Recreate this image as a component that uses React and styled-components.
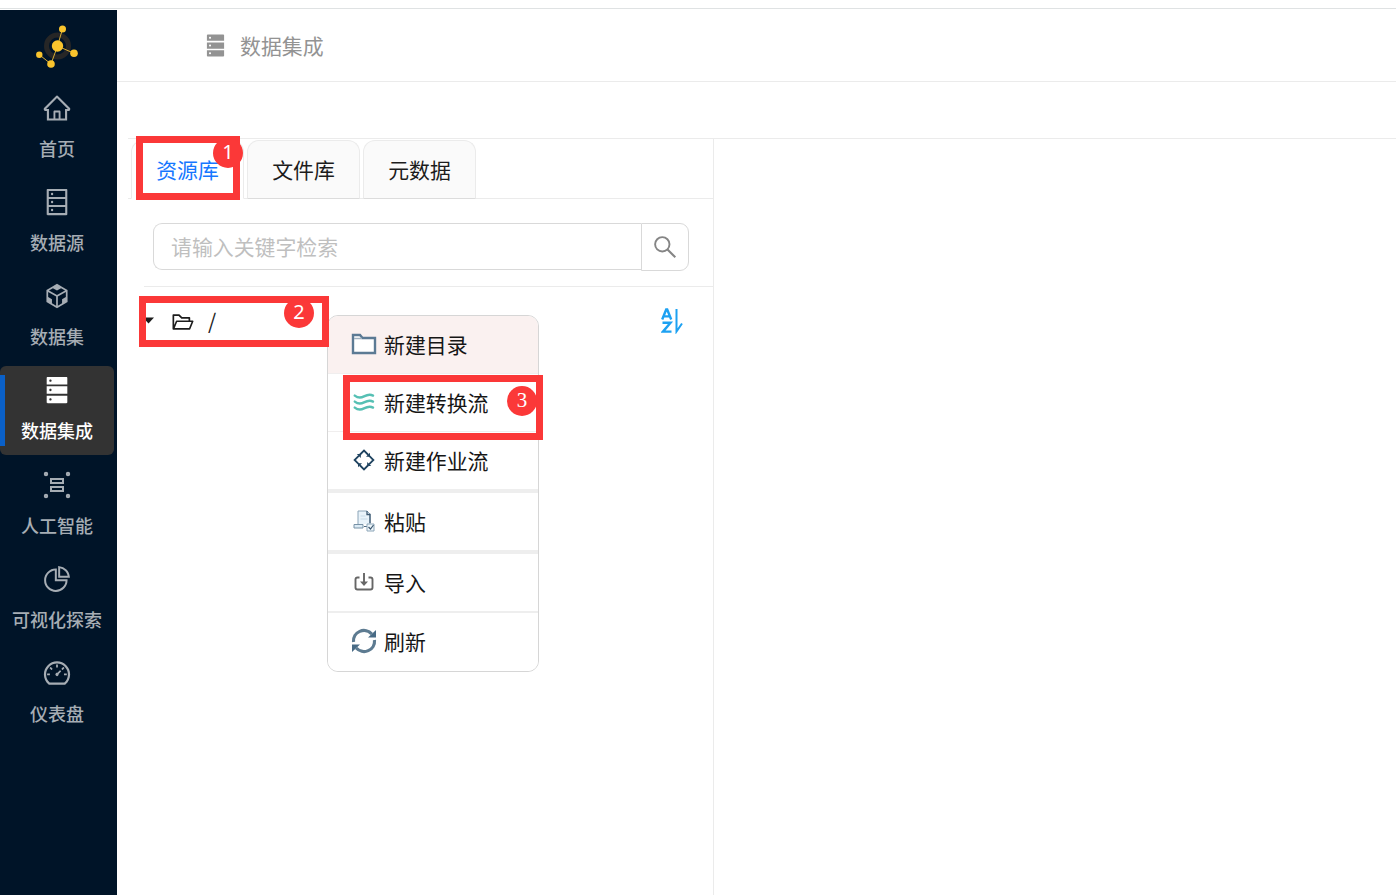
import React from "react";
import styled, { createGlobalStyle, css } from "styled-components";
import {
  AiOutlineHome,
  AiOutlineDatabase,
  AiOutlineCodeSandbox,
  AiFillDatabase,
  AiOutlinePieChart,
  AiOutlineDashboard,
  AiOutlineFolderOpen,
} from "react-icons/ai";

const GlobalStyle = createGlobalStyle`
  *, *::before, *::after { box-sizing: border-box; }
  body {
    margin: 0;
    background: #fff;
    color: #1c1c1c;
    font-family: "Noto Sans CJK SC", sans-serif;
    font-size: 20.9px;
    overflow: hidden;
  }
  svg { display: block; flex: none; }
`;

const Page = styled.div`
  position: relative;
  display: flex;
  flex-direction: column;
  width: 1396px;
  height: 895px;
`;

const TopStrip = styled.div`
  flex: none;
  height: 10px;
  border-bottom: 1px solid #fff;
  box-shadow: inset 0 -1px 0 #dfe2e3;
`;

const Shell = styled.div`
  flex: 1;
  display: flex;
  min-height: 0;
`;

const Sidebar = styled.nav`
  flex: none;
  width: 117px;
  background: #001428;
  display: flex;
  flex-direction: column;
`;

const Logo = styled.div`
  height: 73.4px;
  padding: 13px 0 0 34px;
`;

const NavList = styled.div`
  display: flex;
  flex-direction: column;
  gap: 5.2px;
`;

const NavItem = styled.a`
  width: 114px;
  height: 89px;
  padding-top: 9.5px;
  display: flex;
  flex-direction: column;
  align-items: center;
  border-radius: 6px;
  color: #a6adb4;
  font-size: 18px;
  font-weight: 500;
  line-height: 28px;
  gap: 11px;
  white-space: nowrap;
  ${(p) =>
    p.$active &&
    css`
      color: #fff;
      background: linear-gradient(#0a60c8, #0a60c8) 0 9px / 5px 71px no-repeat, #333;
    `}
`;

const Main = styled.div`
  flex: 1;
  display: flex;
  flex-direction: column;
  min-width: 0;
`;

const Header = styled.header`
  flex: none;
  height: 72px;
  padding: 0 0 1px 86px;
  display: flex;
  align-items: center;
  gap: 12px;
  color: #939393;
  border-bottom: 1px solid #ebebeb;
`;

const HeaderTitle = styled.span`
  padding-bottom: 1px;
`;

const Content = styled.div`
  flex: 1;
  display: flex;
  margin: 56px 0 0 11px;
  border-top: 1px solid #ebebeb;
`;

const Panel = styled.section`
  width: 586px;
  border-right: 1px solid #ebebeb;
`;

const Tabs = styled.div`
  height: 60px;
  display: flex;
  gap: 3px;
  padding: 1px 0 0 3px;
  box-shadow: inset 0 -1px 0 #ebebeb;
`;

const Tab = styled.div`
  width: 113px;
  height: 59px;
  padding-bottom: 2px;
  border: 1px solid #ebebeb;
  border-radius: 12px 12px 0 0;
  display: flex;
  align-items: center;
  justify-content: center;
  background: ${(p) => (p.$active ? "#fff" : "#fafafa")};
  border-bottom-color: ${(p) => (p.$active ? "#fff" : "#dcdcdc")};
  color: ${(p) => (p.$active ? "#1677ff" : "#1c1c1c")};
`;

const SearchRow = styled.div`
  height: 88px;
  display: flex;
  margin-left: 16px;
  padding: 24px 0 0 9px;
  border-bottom: 1px solid #ebebeb;
`;

const SearchField = styled.div`
  width: 488px;
  height: 47px;
  padding: 0 0 2px 17px;
  display: flex;
  align-items: center;
  border: 1px solid #d9d9d9;
  border-right: 0;
  border-radius: 9px 0 0 9px;
  color: #bfbfbf;
`;

const SearchButton = styled.div`
  width: 48px;
  height: 48px;
  display: flex;
  align-items: center;
  justify-content: center;
  border: 1px solid #d9d9d9;
  border-radius: 0 9px 9px 0;
`;

const TreeRow = styled.div`
  height: 67px;
  padding: 0 30px 0 15px;
  display: flex;
  align-items: center;
`;

const TreeIcon = styled.span`
  margin: 2px 13px 0 17px;
`;

const TreeLabel = styled.span`
  flex: 1;
  padding-bottom: 1px;
`;

const Menu = styled.div`
  position: absolute;
  left: 327px;
  top: 315px;
  width: 212px;
  height: 357px;
  border: 1px solid #d6d6d6;
  border-radius: 11px;
  background: #fff;
  overflow: hidden;
`;

const MenuItem = styled.div`
  height: ${(p) => p.$height || 57}px;
  padding: 0 0 2px 23px;
  display: flex;
  align-items: center;
  gap: 7px;
  color: #161616;
  background: ${(p) => (p.$hover ? "#faf1f0" : "#fff")};
  border-bottom: ${(p) => (p.$line ? "1px solid #f0eeee" : "0")};
`;

const MenuIcon = styled.span`
  width: 26px;
  display: flex;
  justify-content: center;
`;

const Divider = styled.div`
  height: ${(p) => p.$size}px;
  background: #eee;
`;

const Mark = styled.div`
  position: absolute;
  left: ${(p) => p.$x}px;
  top: ${(p) => p.$y}px;
  width: ${(p) => p.$w}px;
  height: ${(p) => p.$h}px;
  border: 7px solid #fb3838;
`;

const Badge = styled.span`
  position: absolute;
  left: ${(p) => p.$x}px;
  top: ${(p) => p.$y}px;
  width: 30px;
  height: 30px;
  border-radius: 50%;
  background: #fb3838;
  color: #fff;
  font-family: ${(p) => (p.$serif ? '"Liberation Serif", serif' : '"Noto Sans", sans-serif')};
  font-size: ${(p) => (p.$serif ? 21 : 20)}px;
  line-height: 28px;
  text-align: center;
`;

const LogoMark = () => (
  <svg width="46" height="46" viewBox="0 0 46 46">
    <circle cx="23.5" cy="23" r="11" fill="none" stroke="#262626" strokeWidth="5" />
    <path d="M28.5 6 L23.5 23 L40 30.3 M23.5 23 L17 41 L5.3 31.7" fill="none" stroke="#d9ae35" strokeWidth="1" />
    <g fill="#f9c42d">
      <circle cx="23.5" cy="23" r="5.7" />
      <circle cx="28.5" cy="6" r="3.5" />
      <circle cx="40" cy="30.3" r="3.8" />
      <circle cx="17" cy="41" r="3.8" />
      <circle cx="5.3" cy="31.7" r="3.2" />
    </g>
  </svg>
);

const AiIcon = () => (
  <svg width="30" height="30" viewBox="0 0 30 30" fill="none" stroke="currentColor">
    <path d="M9 9h12v4H9z M9 17h12v4H9z" strokeWidth="2" />
    <g strokeWidth="2">
      <circle cx="4" cy="4" r="1.2" />
      <circle cx="26" cy="4" r="1.2" />
      <circle cx="4" cy="26" r="1.2" />
      <circle cx="26" cy="26" r="1.2" />
    </g>
  </svg>
);

const SearchIcon = () => (
  <svg width="24" height="24" viewBox="0 0 24 24" fill="none" stroke="#858585" strokeWidth="1.9">
    <circle cx="9.3" cy="9.3" r="7.2" />
    <path d="M14.5 14.5l7.8 7.8" strokeWidth="2.1" />
  </svg>
);

const CaretIcon = () => (
  <svg width="11" height="7" viewBox="0 0 11 7">
    <path d="M0 .5h11L5.5 6.5z" fill="#1c1c1c" />
  </svg>
);

const SortIcon = () => (
  <svg width="22" height="26" viewBox="0 0 22 26" fill="none" stroke="#1da1f2">
    <path d="M1.2 11.5 L5.2 1.5h1L10.2 11.5 M2.8 8.4h6" strokeWidth="2.4" />
    <path d="M1.5 14.8h8L2 23.6h8.5" strokeWidth="2.4" />
    <path d="M15.5 1v22.5L21 15.5" strokeWidth="2" />
  </svg>
);

const FolderIcon = () => (
  <svg width="26" height="22" viewBox="0 0 26 22">
    <path d="M2 20V2h7l2.5 3H24v15z" fill="#fff" stroke="#5b7a94" strokeWidth="2.4" />
    <path d="M3 5.5h8" stroke="#9fb0bf" strokeWidth="1.5" />
  </svg>
);

const WavesIcon = () => (
  <svg width="22" height="18" viewBox="0 0 22 18" fill="none" stroke="#56c0b4" strokeWidth="2.4" strokeLinecap="round">
    <path d="M1.8 2.6C5 5.2 8 5 11 3.4s6-2.6 9-.8" />
    <path d="M1.8 8.6C5 11.2 8 11 11 9.400s6-2.6 9-.8" />
    <path d="M1.8 14.6C5 17.2 8 17 11 15.400s6-2.6 9-.8" />
  </svg>
);

const JobIcon = () => (
  <svg width="22" height="22" viewBox="0 0 22 22" fill="none" stroke="#1f4360" strokeWidth="1.8">
    <path d="M6.6 6L11 1.600l4.400 4.400M16 6.600l4.400 4.400-4.400 4.400M15.400 16L11 20.400 6.600 16M6 15.400L1.600 11 6 6.600" />
    <g fill="#1f4360" stroke="none">
      <path d="M17 3.800v4h-4z" />
      <path d="M18.200 17h-4v-4z" />
      <path d="M5 18.200v-4h4z" />
      <path d="M3.800 5h4v4z" />
    </g>
  </svg>
);

const PasteIcon = () => (
  <svg width="22" height="22" viewBox="0 0 22 22" fill="none">
    <path d="M5 14V1h9l3 3v10" fill="#e9f3fa" stroke="#8ca5b8" />
    <path d="M14 1v3.5h3V13" stroke="#3d5972" strokeWidth="1.3" />
    <path d="M7.5 6h5M7.5 9h7" stroke="#c7dae7" />
    <path d="M1 14.5h9v3.5H1z" fill="#dcebf5" stroke="#7892a6" />
    <path d="M11 16.5h3" stroke="#526d82" />
    <path d="M14 14h7v7h-7z" fill="#eef6fa" stroke="#8ca5b8" />
    <path d="M15.5 17l2 2 3-4" stroke="#3d5972" strokeWidth="1.2" />
  </svg>
);

const ImportIcon = () => (
  <svg width="20" height="20" viewBox="0 0 20 20" fill="none" stroke="#666" strokeWidth="1.9">
    <path d="M5.5 5.5H3.5Q1.5 5.5 1.5 7.5v8q0 2 2 2h13q2 0 2-2v-8q0-2-2-2h-2" />
    <path d="M10 1V12" />
    <path d="M6 9.5h8L10 14z" fill="#666" stroke="none" />
  </svg>
);

const RefreshIcon = () => (
  <svg width="26" height="26" viewBox="0 0 26 26" fill="none" stroke="#5d7b91" strokeWidth="3.2">
    <path d="M2.5 14A10.5 10.5 0 0 1 20.8 6" />
    <path d="M23.5 12A10.5 10.5 0 0 1 5.2 20" />
    <path d="M25 2v7.5h-8z M1 24v-7.5h8z" fill="#486b86" stroke="none" />
  </svg>
);

const NAV = [
  ["首页", AiOutlineHome],
  ["数据源", AiOutlineDatabase],
  ["数据集", AiOutlineCodeSandbox],
  ["数据集成", AiFillDatabase],
  ["人工智能", AiIcon],
  ["可视化探索", AiOutlinePieChart],
  ["仪表盘", AiOutlineDashboard],
];

export default function App() {
  return (
    <>
      <GlobalStyle />
      <Page>
        <TopStrip />
        <Shell>
          <Sidebar>
            <Logo><LogoMark /></Logo>
            <NavList>
              {NAV.map(([label, Icon]) => (
                <NavItem key={label} $active={label === "数据集成"}>
                  <Icon size={30} />
                  <span>{label}</span>
                </NavItem>
              ))}
            </NavList>
          </Sidebar>
          <Main>
            <Header>
              <AiFillDatabase size={25} />
              <HeaderTitle>数据集成</HeaderTitle>
            </Header>
            <Content>
              <Panel>
                <Tabs>
                  <Tab $active>资源库</Tab>
                  <Tab>文件库</Tab>
                  <Tab>元数据</Tab>
                </Tabs>
                <SearchRow>
                  <SearchField>请输入关键字检索</SearchField>
                  <SearchButton><SearchIcon /></SearchButton>
                </SearchRow>
                <TreeRow>
                  <CaretIcon />
                  <TreeIcon><AiOutlineFolderOpen size={24} /></TreeIcon>
                  <TreeLabel>/</TreeLabel>
                  <SortIcon />
                </TreeRow>
              </Panel>
            </Content>
          </Main>
        </Shell>
        <Menu>
          <MenuItem $hover $line $height={58}><MenuIcon><FolderIcon /></MenuIcon>新建目录</MenuItem>
          <MenuItem $line $height={58}><MenuIcon><WavesIcon /></MenuIcon>新建转换流</MenuItem>
          <MenuItem><MenuIcon><JobIcon /></MenuIcon>新建作业流</MenuItem>
          <Divider $size={4} />
          <MenuItem><MenuIcon><PasteIcon /></MenuIcon>粘贴</MenuItem>
          <Divider $size={4} />
          <MenuItem><MenuIcon><ImportIcon /></MenuIcon>导入</MenuItem>
          <Divider $size={2} />
          <MenuItem $height={58}><MenuIcon><RefreshIcon /></MenuIcon>刷新</MenuItem>
        </Menu>
        <Mark $x={136} $y={136} $w={104} $h={64} />
        <Badge $x={213} $y={138}>1</Badge>
        <Mark $x={139} $y={296} $w={190} $h={51} />
        <Badge $x={284} $y={298}>2</Badge>
        <Mark $x={343} $y={375} $w={200} $h={65} />
        <Badge $x={507} $y={386} $serif>3</Badge>
      </Page>
    </>
  );
}
